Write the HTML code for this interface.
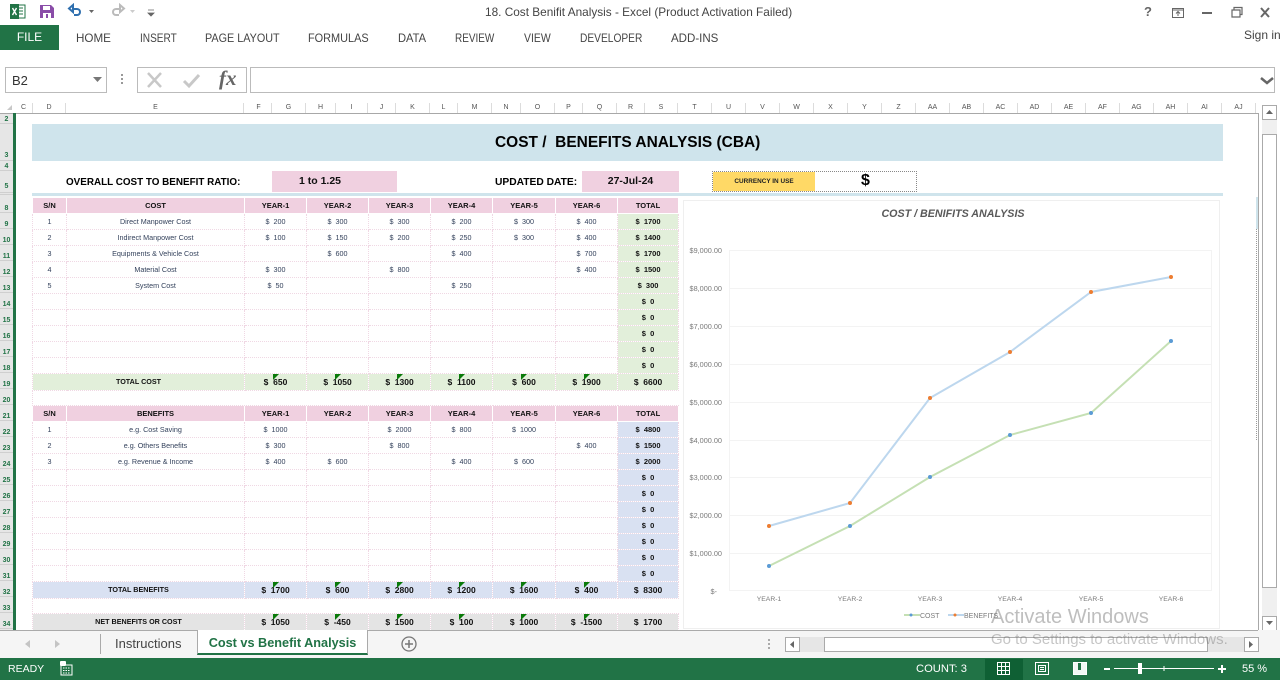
<!DOCTYPE html>
<html><head><meta charset="utf-8"><style>
html,body{margin:0;padding:0;width:1280px;height:680px;overflow:hidden;background:#fff;font-family:"Liberation Sans",sans-serif;}
.a{position:absolute;white-space:nowrap;}
.rb{font-size:12px;color:#444;top:31px;transform-origin:left center;}
.ch{position:absolute;top:103px;height:10px;font-size:7px;line-height:10px;color:#555;text-align:center;border-right:1px solid #dcdcdc;box-sizing:border-box;}
.rh{position:absolute;left:0;width:13px;text-align:center;font-size:7px;font-weight:bold;color:#217346;line-height:10px;}
table{position:absolute;left:32px;top:197px;border-collapse:collapse;table-layout:fixed;width:646px;}
td{padding:0;border:1px dotted #f0d8e4;font-size:7.2px;color:#34425c;text-align:center;overflow:hidden;white-space:nowrap;height:15px;line-height:15px;box-sizing:border-box;}
tr.h td{background:#f0d0e0;font-weight:bold;font-size:7.5px;color:#111;border-color:#fff;}
tr.r td{height:16px}
td.t{background:#e2efda;font-weight:bold;color:#111;font-size:7.5px;}
td.u{background:#d9e1f2;font-weight:bold;color:#111;font-size:7.5px;}
tr.g td{background:#e2efda;font-weight:bold;font-size:8.5px;color:#111;height:17px;position:relative;}
tr.b td{background:#d9e1f2;font-weight:bold;font-size:8.5px;color:#111;height:17px;position:relative;}
tr.n td{background:#e4e4e4;font-weight:bold;font-size:8.5px;color:#111;height:17px;position:relative;}
tr.g td:first-child,tr.b td:first-child,tr.n td:first-child{font-size:7.2px;line-height:15px;vertical-align:top;}
.tri{position:absolute;width:0;height:0;border-top:6px solid #0a7a0a;border-right:6px solid transparent;top:0;}
</style></head><body>
<!-- title bar -->
<svg class="a" style="left:9px;top:3px" width="170" height="18" viewBox="0 0 170 18">
<rect x="7" y="2" width="9" height="13" fill="#fff" stroke="#217346"/><path d="M9 5h5M9 8h5M9 11h5" stroke="#217346"/><rect x="1" y="1" width="9" height="15" fill="#217346"/><path d="M3.5 5l4 7M7.5 5l-4 7" stroke="#fff" stroke-width="1.4"/>
<path d="M31 2h11l3 3v10H31z" fill="#8a4da8"/><rect x="34" y="3" width="7" height="4" fill="#fff"/><rect x="34" y="10" width="8" height="5" fill="#fff"/><rect x="37" y="11" width="2" height="4" fill="#8a4da8"/>
<path d="M64 5v-3l-4 3.500 4 3.500v-3h4c4 0 4 6 0 6h-3" fill="none" stroke="#2f6fae" stroke-width="2"/>
<path d="M80 7h5l-2.500 3z" fill="#666"/>
<path d="M111 5v-3l4 3.500-4 3.500v-3h-4c-4 0-4 6 0 6h3" fill="none" stroke="#bbb" stroke-width="2"/>
<path d="M121 7h5l-2.500 3z" fill="#ccc"/>
<path d="M139 7h6M139 10h6l-3 3z" fill="#666" stroke="#666" stroke-width=".8"/>
</svg>
<div class="a" style="left:485px;top:5px;font-size:12px;color:#444;transform-origin:left center;transform:scaleX(.984)">18. Cost Benifit Analysis - Excel (Product Activation Failed)</div>
<svg class="a" style="left:1140px;top:2px" width="140" height="20" viewBox="0 0 140 20">
<text x="4" y="14" font-size="13" font-weight="bold" fill="#666" font-family="Liberation Sans">?</text>
<rect x="32.500" y="6.500" width="11" height="9" fill="none" stroke="#666"/><path d="M33 8h11M38 14v-4M36 11.500l2-2 2 2" fill="none" stroke="#666"/>
<rect x="62" y="10" width="10" height="2" fill="#666"/>
<path d="M92 8h8v7h-8zM94 8V5.500h8v7h-2" fill="none" stroke="#666" stroke-width="1.200"/>
<path d="M121 6l8 9M129 6l-8 9" stroke="#666" stroke-width="2"/>
</svg>
<!-- ribbon -->
<div class="a" style="left:0;top:25px;width:59px;height:25px;background:#217346;color:#fff;font-size:12px;line-height:25px;text-align:center">FILE</div>
<div class="a rb" style="left:76px;transform:scaleX(.97)">HOME</div>
<div class="a rb" style="left:140px;transform:scaleX(.84)">INSERT</div>
<div class="a rb" style="left:205px;transform:scaleX(.9)">PAGE LAYOUT</div>
<div class="a rb" style="left:308px;transform:scaleX(.91)">FORMULAS</div>
<div class="a rb" style="left:398px;transform:scaleX(.93)">DATA</div>
<div class="a rb" style="left:455px;transform:scaleX(.83)">REVIEW</div>
<div class="a rb" style="left:524px;transform:scaleX(.87)">VIEW</div>
<div class="a rb" style="left:580px;transform:scaleX(.85)">DEVELOPER</div>
<div class="a rb" style="left:671px;transform:scaleX(.96)">ADD-INS</div>
<div class="a" style="left:1244px;top:28px;font-size:12px;color:#444">Sign in</div>
<!-- formula bar -->
<div class="a" style="left:5px;top:67px;width:102px;height:26px;border:1px solid #bbb;box-sizing:border-box;font-size:13px;line-height:25px;padding-left:6px;color:#333">B2</div>
<svg class="a" style="left:92px;top:76px" width="14" height="8"><path d="M1 1h9l-4.500 5z" fill="#777"/></svg>
<div class="a" style="left:121px;top:74px;width:2px;height:2px;background:#999;box-shadow:0 4px #999,0 8px #999"></div>
<div class="a" style="left:137px;top:67px;width:110px;height:26px;border:1px solid #bbb;box-sizing:border-box"></div>
<svg class="a" style="left:145px;top:71px" width="100" height="20"><path d="M3 2l13 14M16 2L3 16" stroke="#c8c8c8" stroke-width="2.500"/><path d="M39 10l5 5 10-11" fill="none" stroke="#c8c8c8" stroke-width="3"/></svg>
<div class="a" style="left:219px;top:66px;font-family:'Liberation Serif',serif;font-style:italic;font-weight:bold;font-size:21px;color:#666">fx</div>
<div class="a" style="left:250px;top:67px;width:1025px;height:26px;border:1px solid #bbb;box-sizing:border-box"></div>
<svg class="a" style="left:1260px;top:77px" width="14" height="9"><path d="M1 1l6 5 6-5" fill="none" stroke="#666" stroke-width="2.500"/></svg>
<!-- column headers -->
<svg class="a" style="left:7px;top:105px" width="6" height="6"><path d="M5 0v5H0z" fill="#c8c8c8"/></svg>
<div class="ch" style="left:15px;width:18px">C</div><div class="ch" style="left:33px;width:33px">D</div><div class="ch" style="left:66px;width:178px;padding-left:2px">E</div><div class="ch" style="left:244px;width:28px;padding-left:2px">F</div><div class="ch" style="left:272px;width:34px">G</div><div class="ch" style="left:306px;width:30px">H</div><div class="ch" style="left:336px;width:32px">I</div><div class="ch" style="left:368px;width:28px">J</div><div class="ch" style="left:396px;width:34px">K</div><div class="ch" style="left:430px;width:28px">L</div><div class="ch" style="left:458px;width:34px">M</div><div class="ch" style="left:492px;width:29px">N</div><div class="ch" style="left:521px;width:34px">O</div><div class="ch" style="left:555px;width:28px">P</div><div class="ch" style="left:583px;width:34px">Q</div><div class="ch" style="left:617px;width:28px">R</div><div class="ch" style="left:645px;width:33px">S</div><div class="ch" style="left:678px;width:34px">T</div><div class="ch" style="left:712px;width:34px">U</div><div class="ch" style="left:746px;width:34px">V</div><div class="ch" style="left:780px;width:34px">W</div><div class="ch" style="left:814px;width:34px">X</div><div class="ch" style="left:848px;width:34px">Y</div><div class="ch" style="left:882px;width:34px">Z</div><div class="ch" style="left:916px;width:34px">AA</div><div class="ch" style="left:950px;width:34px">AB</div><div class="ch" style="left:984px;width:34px">AC</div><div class="ch" style="left:1018px;width:34px">AD</div><div class="ch" style="left:1052px;width:34px">AE</div><div class="ch" style="left:1086px;width:34px">AF</div><div class="ch" style="left:1120px;width:34px">AG</div><div class="ch" style="left:1154px;width:34px">AH</div><div class="ch" style="left:1188px;width:34px">AI</div><div class="ch" style="left:1222px;width:34px">AJ</div>
<div class="a" style="left:0;top:113px;width:1259px;height:1px;background:#a8a8a8"></div>
<div class="a" style="left:1258px;top:113px;width:1px;height:517px;background:#a8a8a8"></div>
<!-- row header -->
<div class="a" style="left:0;top:114px;width:13px;height:516px;background:#e6e6e6"></div>
<div class="a" style="left:0;top:197px;width:13px;height:433px;background:repeating-linear-gradient(to bottom,#e6e6e6 0,#e6e6e6 15px,#cfcfcf 15px,#cfcfcf 16px)"></div>
<div class="a" style="left:0;top:123px;width:13px;height:1px;background:#cfcfcf;box-shadow:0 37px #cfcfcf,0 47px #cfcfcf,0 69px #cfcfcf,0 71px #cfcfcf"></div>
<div class="a" style="left:13px;top:113px;width:3px;height:517px;background:#217346"></div>
<div class="rh" style="top:115px">2</div><div class="rh" style="top:151px">3</div><div class="rh" style="top:162px">4</div><div class="rh" style="top:182px">5</div>
<div class="rh" style="top:204px">8</div><div class="rh" style="top:220px">9</div><div class="rh" style="top:236px">10</div><div class="rh" style="top:252px">11</div><div class="rh" style="top:268px">12</div><div class="rh" style="top:284px">13</div><div class="rh" style="top:300px">14</div><div class="rh" style="top:316px">15</div><div class="rh" style="top:332px">16</div><div class="rh" style="top:348px">17</div><div class="rh" style="top:364px">18</div><div class="rh" style="top:380px">19</div><div class="rh" style="top:396px">20</div><div class="rh" style="top:412px">21</div><div class="rh" style="top:428px">22</div><div class="rh" style="top:444px">23</div><div class="rh" style="top:460px">24</div><div class="rh" style="top:476px">25</div><div class="rh" style="top:492px">26</div><div class="rh" style="top:508px">27</div><div class="rh" style="top:524px">28</div><div class="rh" style="top:540px">29</div><div class="rh" style="top:556px">30</div><div class="rh" style="top:572px">31</div><div class="rh" style="top:588px">32</div><div class="rh" style="top:604px">33</div><div class="rh" style="top:620px">34</div>
<!-- sheet top -->
<div class="a" style="left:32px;top:124px;width:1191px;height:37px;background:#cfe4ec"></div>
<div class="a" style="left:495px;top:124px;font-weight:bold;font-size:16px;line-height:38px;color:#000;white-space:pre;transform-origin:left center;transform:scaleX(.967)">COST /  BENEFITS ANALYSIS (CBA)</div>
<div class="a" style="left:66px;top:176px;font-size:10.500px;font-weight:bold;color:#000;transform-origin:left center;transform:scaleX(.94)">OVERALL COST TO BENEFIT RATIO:</div>
<div class="a" style="left:272px;top:171px;width:125px;height:21px;background:#f0d0e0;box-sizing:border-box;padding-left:27px;font-weight:bold;font-size:10.500px;line-height:21px;color:#111">1 to 1.25</div>
<div class="a" style="left:495px;top:176px;font-size:10.500px;font-weight:bold;color:#000;transform-origin:left center;transform:scaleX(.976)">UPDATED DATE:</div>
<div class="a" style="left:582px;top:171px;width:97px;height:21px;background:#f0d0e0;text-align:center;font-weight:bold;font-size:10.500px;line-height:21px;color:#111">27-Jul-24</div>
<div class="a" style="left:712px;top:171px;width:205px;height:21px;border:1px dotted #888;box-sizing:border-box"></div>
<div class="a" style="left:713px;top:172px;width:102px;height:19px;background:#ffd966;text-align:center;font-weight:bold;font-size:6.400px;line-height:19px;color:#222">CURRENCY IN USE</div>
<div class="a" style="left:861px;top:172px;font-weight:bold;font-size:16px;color:#000">$</div>
<div class="a" style="left:32px;top:193px;width:1191px;height:3px;background:#cfe4ec"></div>
<div class="a" style="left:1256px;top:197px;width:2px;height:32px;background:#cfe4ec"></div>
<div class="a" style="left:1256px;top:229px;height:211px;border-left:1px dotted #999"></div>
<!-- tables -->
<div class="a" style="left:0;top:0;width:1258px;height:630px;overflow:hidden;pointer-events:none">
<table><colgroup><col style="width:34px"><col style="width:178px"><col style="width:62px"><col style="width:62px"><col style="width:62px"><col style="width:62px"><col style="width:63px"><col style="width:62px"><col style="width:61px"></colgroup>
<tr class="h r"><td>S/N</td><td>COST</td><td>YEAR-1</td><td>YEAR-2</td><td>YEAR-3</td><td>YEAR-4</td><td>YEAR-5</td><td>YEAR-6</td><td>TOTAL</td></tr>
<tr class="r"><td>1</td><td>Direct Manpower Cost</td><td>$&nbsp; 200</td><td>$&nbsp; 300</td><td>$&nbsp; 300</td><td>$&nbsp; 200</td><td>$&nbsp; 300</td><td>$&nbsp; 400</td><td class="t">$&nbsp; 1700</td></tr>
<tr class="r"><td>2</td><td>Indirect Manpower Cost</td><td>$&nbsp; 100</td><td>$&nbsp; 150</td><td>$&nbsp; 200</td><td>$&nbsp; 250</td><td>$&nbsp; 300</td><td>$&nbsp; 400</td><td class="t">$&nbsp; 1400</td></tr>
<tr class="r"><td>3</td><td>Equipments &amp; Vehicle Cost</td><td></td><td>$&nbsp; 600</td><td></td><td>$&nbsp; 400</td><td></td><td>$&nbsp; 700</td><td class="t">$&nbsp; 1700</td></tr>
<tr class="r"><td>4</td><td>Material Cost</td><td>$&nbsp; 300</td><td></td><td>$&nbsp; 800</td><td></td><td></td><td>$&nbsp; 400</td><td class="t">$&nbsp; 1500</td></tr>
<tr class="r"><td>5</td><td>System Cost</td><td>$&nbsp; 50</td><td></td><td></td><td>$&nbsp; 250</td><td></td><td></td><td class="t">$&nbsp; 300</td></tr>
<tr class="r"><td></td><td></td><td></td><td></td><td></td><td></td><td></td><td></td><td class="t">$&nbsp; 0</td></tr>
<tr class="r"><td></td><td></td><td></td><td></td><td></td><td></td><td></td><td></td><td class="t">$&nbsp; 0</td></tr>
<tr class="r"><td></td><td></td><td></td><td></td><td></td><td></td><td></td><td></td><td class="t">$&nbsp; 0</td></tr>
<tr class="r"><td></td><td></td><td></td><td></td><td></td><td></td><td></td><td></td><td class="t">$&nbsp; 0</td></tr>
<tr class="r"><td></td><td></td><td></td><td></td><td></td><td></td><td></td><td></td><td class="t">$&nbsp; 0</td></tr>
<tr class="g"><td colspan="2">TOTAL COST</td><td>$&nbsp; 650<i class="tri" style="left:28px"></i></td><td>$&nbsp; 1050<i class="tri" style="left:28px"></i></td><td>$&nbsp; 1300<i class="tri" style="left:28px"></i></td><td>$&nbsp; 1100<i class="tri" style="left:28px"></i></td><td>$&nbsp; 600<i class="tri" style="left:28px"></i></td><td>$&nbsp; 1900<i class="tri" style="left:28px"></i></td><td>$&nbsp; 6600</td></tr>
<tr style="height:15px"><td colspan="9" style="border-right:0;height:15px"></td></tr>
<tr class="h r"><td>S/N</td><td>BENEFITS</td><td>YEAR-1</td><td>YEAR-2</td><td>YEAR-3</td><td>YEAR-4</td><td>YEAR-5</td><td>YEAR-6</td><td>TOTAL</td></tr>
<tr class="r"><td>1</td><td>e.g. Cost Saving</td><td>$&nbsp; 1000</td><td></td><td>$&nbsp; 2000</td><td>$&nbsp; 800</td><td>$&nbsp; 1000</td><td></td><td class="u">$&nbsp; 4800</td></tr>
<tr class="r"><td>2</td><td>e.g. Others Benefits</td><td>$&nbsp; 300</td><td></td><td>$&nbsp; 800</td><td></td><td></td><td>$&nbsp; 400</td><td class="u">$&nbsp; 1500</td></tr>
<tr class="r"><td>3</td><td>e.g. Revenue &amp; Income</td><td>$&nbsp; 400</td><td>$&nbsp; 600</td><td></td><td>$&nbsp; 400</td><td>$&nbsp; 600</td><td></td><td class="u">$&nbsp; 2000</td></tr>
<tr class="r"><td></td><td></td><td></td><td></td><td></td><td></td><td></td><td></td><td class="u">$&nbsp; 0</td></tr>
<tr class="r"><td></td><td></td><td></td><td></td><td></td><td></td><td></td><td></td><td class="u">$&nbsp; 0</td></tr>
<tr class="r"><td></td><td></td><td></td><td></td><td></td><td></td><td></td><td></td><td class="u">$&nbsp; 0</td></tr>
<tr class="r"><td></td><td></td><td></td><td></td><td></td><td></td><td></td><td></td><td class="u">$&nbsp; 0</td></tr>
<tr class="r"><td></td><td></td><td></td><td></td><td></td><td></td><td></td><td></td><td class="u">$&nbsp; 0</td></tr>
<tr class="r"><td></td><td></td><td></td><td></td><td></td><td></td><td></td><td></td><td class="u">$&nbsp; 0</td></tr>
<tr class="r"><td></td><td></td><td></td><td></td><td></td><td></td><td></td><td></td><td class="u">$&nbsp; 0</td></tr>
<tr class="b"><td colspan="2">TOTAL BENEFITS</td><td>$&nbsp; 1700<i class="tri" style="left:28px"></i></td><td>$&nbsp; 600<i class="tri" style="left:28px"></i></td><td>$&nbsp; 2800<i class="tri" style="left:28px"></i></td><td>$&nbsp; 1200<i class="tri" style="left:28px"></i></td><td>$&nbsp; 1600<i class="tri" style="left:28px"></i></td><td>$&nbsp; 400<i class="tri" style="left:28px"></i></td><td>$&nbsp; 8300</td></tr>
<tr style="height:15px"><td colspan="9" style="border-right:0;height:15px"></td></tr>
<tr class="n"><td colspan="2">NET BENEFITS OR COST</td><td>$&nbsp; 1050<i class="tri" style="left:28px"></i></td><td>$&nbsp; -450<i class="tri" style="left:28px"></i></td><td>$&nbsp; 1500<i class="tri" style="left:28px"></i></td><td>$&nbsp; 100<i class="tri" style="left:28px"></i></td><td>$&nbsp; 1000<i class="tri" style="left:28px"></i></td><td>$&nbsp; -1500<i class="tri" style="left:28px"></i></td><td>$&nbsp; 1700</td></tr>
</table>
</div>
<!-- chart -->
<svg class="a" style="left:683px;top:200px" width="537" height="429" viewBox="683 200 537 429" font-family="Liberation Sans">
<rect x="683.500" y="200.500" width="536" height="428" fill="#fff" stroke="#efefef"/>
<text x="953" y="217" text-anchor="middle" font-size="10.700" font-weight="bold" font-style="italic" fill="#595959">COST / BENIFITS ANALYSIS</text>
<path d="M729.500 250.500H1211.500V590.500H729.500ZM729.500 288.500H1211.500M729.500 326.500H1211.500M729.500 364.500H1211.500M729.500 402.500H1211.500M729.500 440.500H1211.500M729.500 477.500H1211.500M729.500 515.500H1211.500M729.500 553.500H1211.500" fill="none" stroke="#f3f3f3"/>
<g font-size="7.300" fill="#7a7a7a" text-anchor="end"><text x="722" y="253">$9,000.00</text><text x="722" y="291">$8,000.00</text><text x="722" y="329">$7,000.00</text><text x="722" y="367">$6,000.00</text><text x="722" y="405">$5,000.00</text><text x="722" y="443">$4,000.00</text><text x="722" y="480">$3,000.00</text><text x="722" y="518">$2,000.00</text><text x="722" y="556">$1,000.00</text><text x="717" y="594">$-</text></g>
<g font-size="6.800" fill="#7a7a7a" text-anchor="middle"><text x="769" y="601">YEAR-1</text><text x="850" y="601">YEAR-2</text><text x="930" y="601">YEAR-3</text><text x="1010" y="601">YEAR-4</text><text x="1091" y="601">YEAR-5</text><text x="1171" y="601">YEAR-6</text></g>
<polyline points="769,566 850,526 930,477 1010,435 1091,413 1171,341" fill="none" stroke="#c5e0b4" stroke-width="2"/>
<polyline points="769,526 850,503 930,398 1010,352 1091,292 1171,277" fill="none" stroke="#bdd7ee" stroke-width="2"/>
<g fill="#5b9bd5"><circle cx="769" cy="566" r="2"/><circle cx="850" cy="526" r="2"/><circle cx="930" cy="477" r="2"/><circle cx="1010" cy="435" r="2"/><circle cx="1091" cy="413" r="2"/><circle cx="1171" cy="341" r="2"/></g>
<g fill="#ed7d31"><circle cx="769" cy="526" r="2"/><circle cx="850" cy="503" r="2"/><circle cx="930" cy="398" r="2"/><circle cx="1010" cy="352" r="2"/><circle cx="1091" cy="292" r="2"/><circle cx="1171" cy="277" r="2"/></g>
<path d="M904 615h16" stroke="#c5e0b4" stroke-width="2"/><circle cx="911" cy="615" r="1.500" fill="#5b9bd5"/>
<path d="M948 615h16" stroke="#bdd7ee" stroke-width="2"/><circle cx="955" cy="615" r="1.500" fill="#ed7d31"/>
<g font-size="7" fill="#7a7a7a"><text x="920" y="618">COST</text><text x="964" y="618">BENEFITS</text></g>
</svg>
<!-- vertical scrollbar -->
<div class="a" style="left:1262px;top:105px;width:15px;height:15px;border:1px solid #aaa;box-sizing:border-box;background:#fff"></div>
<svg class="a" style="left:1265px;top:109px" width="10" height="7"><path d="M1 5h7L4.500 1z" fill="#666"/></svg>
<div class="a" style="left:1262px;top:120px;width:15px;height:510px;background:#f0f0f0"></div>
<div class="a" style="left:1262px;top:134px;width:15px;height:454px;border:1px solid #aaa;box-sizing:border-box;background:#fff"></div>
<div class="a" style="left:1262px;top:616px;width:15px;height:15px;border:1px solid #aaa;box-sizing:border-box;background:#fff"></div>
<svg class="a" style="left:1265px;top:620px" width="10" height="7"><path d="M1 1h7L4.500 5z" fill="#666"/></svg>
<!-- tab strip -->
<div class="a" style="left:0;top:630px;width:1280px;height:28px;background:#f5f5f5"></div>
<div class="a" style="left:0;top:630px;width:197px;height:1px;background:#aaa"></div>
<div class="a" style="left:368px;top:630px;width:890px;height:1px;background:#aaa"></div>
<svg class="a" style="left:24px;top:638px" width="40" height="12"><path d="M6 2v8L1 6zM31 2v8l5-4z" fill="#c4c4c4"/></svg>
<div class="a" style="left:100px;top:634px;width:1px;height:20px;background:#aaa"></div>
<div class="a" style="left:115px;top:636px;font-size:13px;color:#444">Instructions</div>
<div class="a" style="left:197px;top:630px;width:171px;height:25px;background:#fff;border-left:1px solid #aaa;border-right:1px solid #aaa;border-bottom:2px solid #217346;box-sizing:border-box;text-align:center;font-size:12.700px;font-weight:bold;line-height:26px;color:#217346">Cost vs Benefit Analysis</div>
<svg class="a" style="left:400px;top:635px" width="18" height="18"><circle cx="9" cy="9" r="7" fill="none" stroke="#777" stroke-width="1.300"/><path d="M5 9h8M9 5v8" stroke="#777" stroke-width="1.500"/></svg>
<div class="a" style="left:768px;top:639px;width:2px;height:2px;background:#aaa;box-shadow:0 4px #aaa,0 8px #aaa"></div>
<div class="a" style="left:785px;top:637px;width:474px;height:15px;background:#e6e6e6"></div>
<div class="a" style="left:785px;top:637px;width:15px;height:15px;border:1px solid #aaa;box-sizing:border-box;background:#fff"></div>
<svg class="a" style="left:788px;top:640px" width="9" height="9"><path d="M6 1v7L2 4.500z" fill="#666"/></svg>
<div class="a" style="left:824px;top:637px;width:384px;height:15px;border:1px solid #aaa;box-sizing:border-box;background:#fff"></div>
<div class="a" style="left:1244px;top:637px;width:15px;height:15px;border:1px solid #aaa;box-sizing:border-box;background:#fff"></div>
<svg class="a" style="left:1247px;top:640px" width="9" height="9"><path d="M2 1v7l4-3.500z" fill="#666"/></svg>
<!-- watermark -->
<div class="a" style="left:991px;top:606px;font-size:20px;color:rgba(110,110,110,.45)">Activate Windows</div>
<div class="a" style="left:991px;top:631px;font-size:15px;color:rgba(110,110,110,.4)">Go to Settings to activate Windows.</div>
<!-- status bar -->
<div class="a" style="left:0;top:658px;width:1280px;height:22px;background:#217346"></div>
<div class="a" style="left:8px;top:663px;font-size:10.500px;color:#fff">READY</div>
<svg class="a" style="left:59px;top:661px" width="15" height="15"><path d="M2 4h11v10H2z" fill="#217346" stroke="#fff"/><path d="M4 7h7M4 9.500h7M4 12h7" stroke="#fff" stroke-dasharray="1.500 1"/><rect x="1" y="0" width="6" height="5" rx="1" fill="#fff"/></svg>
<div class="a" style="left:916px;top:663px;font-size:11.200px;color:#fff">COUNT: 3</div>
<div class="a" style="left:985px;top:659px;width:38px;height:21px;background:#0f6034"></div>
<svg class="a" style="left:996px;top:661px" width="95" height="16"><path d="M1.500 1.500h12v12h-12zM1.500 5.500h12M1.500 9.500h12M5.500 1.500v12M9.500 1.500v12" fill="none" stroke="#fff"/><path d="M39.500 1.500h13v12h-13zM42.500 4.500h7v6h-7zM44 6.500h4M44 8.500h4" fill="none" stroke="#fff"/><path d="M77.500 1.500h13v12h-13z" fill="none" stroke="#fff"/><path d="M78 2h4v7h3V2h5v11H78z" fill="#fff" opacity=".95"/></svg>
<svg class="a" style="left:1100px;top:660px" width="130" height="18"><path d="M4 9h6M118 9h8M122 5v8" stroke="#fff" stroke-width="2"/><path d="M14 8.500h100M64 6v5" stroke="#fff"/><rect x="38" y="3" width="4" height="11" fill="#fff"/></svg>
<div class="a" style="left:1242px;top:663px;font-size:11px;color:#fff">55 %</div>
</body></html>
